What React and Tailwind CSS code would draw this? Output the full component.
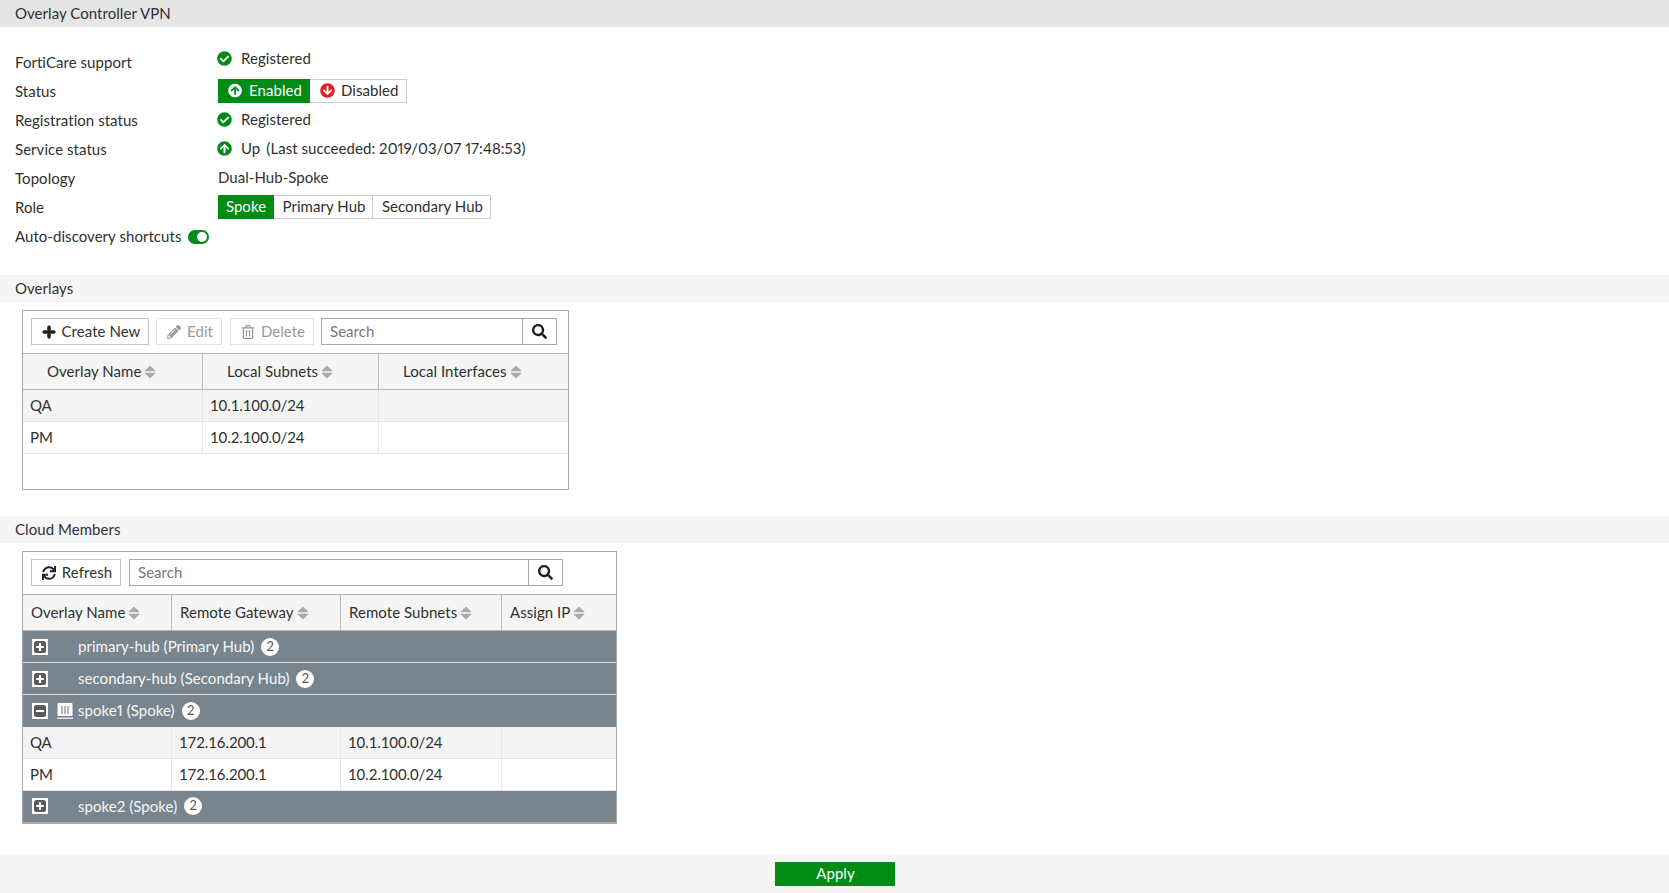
import React from 'react';
import {
  FaCheckCircle,
  FaArrowCircleUp,
  FaArrowCircleDown,
  FaPlus,
  FaPencilAlt,
  FaRegTrashAlt,
  FaSearch,
  FaSync,
} from 'react-icons/fa';

const FONT = "font-['Lato','Noto_Sans',sans-serif]";

function SortIcon() {
  return (
    <svg width="12" height="14" viewBox="0 0 12 14" className="ml-[3px] shrink-0" fill="#aaaaaa">
      <path d="M6 0.6 L11.2 5.4 Q11.6 6.2 10.8 6.2 L1.2 6.2 Q0.4 6.2 0.8 5.4 Z" />
      <path d="M6 13.4 L11.2 8.6 Q11.6 7.8 10.8 7.8 L1.2 7.8 Q0.4 7.8 0.8 8.6 Z" />
    </svg>
  );
}

function FormRow({ label, children, valueClass = 'mb-[2px]' }) {
  return (
    <div className="flex h-[29px] items-center">
      <div className="w-[218px] shrink-0 pl-[15px]">{label}</div>
      <div className={`flex items-center ${valueClass}`}>{children}</div>
    </div>
  );
}

function SectionBar({ children }) {
  return <div className="flex h-[27px] items-center bg-[#f5f5f5] pl-[15px]">{children}</div>;
}

function ToolButton({ icon, label, disabled, className = '' }) {
  return (
    <div
      className={`flex h-[27px] items-center justify-center gap-[6px] border bg-white pl-[2px] ${
        disabled ? 'border-[#e6e6e6] text-[#999999]' : 'border-[#c4c4c4] text-[#333333]'
      } ${className}`}
    >
      {icon}
      <span>{label}</span>
    </div>
  );
}

function SearchBox({ className }) {
  return (
    <div className={`flex h-[27px] border border-[#aaaaaa] bg-white ${className}`}>
      <div className="flex flex-1 items-center pl-2 text-[#777777]">Search</div>
      <div className="flex w-[34px] items-center justify-center border-l border-[#aaaaaa] text-[#222222]">
        <FaSearch size={15} />
      </div>
    </div>
  );
}

function HeaderRow({ cols, template }) {
  return (
    <div className={`grid h-[37px] border-y border-[#b4b4b4] bg-[#f5f5f5] ${template}`}>
      {cols.map((c, i) => (
        <div
          key={c.label}
          className={`flex items-center ${c.pad} ${i > 0 ? 'border-l border-[#bcbcbc]' : ''}`}
        >
          {c.label}
          <SortIcon />
        </div>
      ))}
    </div>
  );
}

function DataRow({ cells, template, striped, height }) {
  return (
    <div
      className={`grid border-b border-[#e4e4e4] ${height} ${template} ${
        striped ? 'bg-[#f4f4f4]' : 'bg-white'
      }`}
    >
      {cells.map((c, i) => (
        <div
          key={i}
          className={`flex items-center pl-[7px] ${i === 0 ? '' : 'border-l border-[#e8e8e8]'}`}
        >
          <span className="tabular-nums tracking-[-0.1px]">{c}</span>
        </div>
      ))}
    </div>
  );
}

function ExpandIcon({ open }) {
  return (
    <span className="flex h-4 w-4 shrink-0 items-center justify-center bg-white">
      <svg width="12" height="12" viewBox="0 0 12 12">
        <rect x="0" y="0" width="12" height="12" rx="2.5" fill="#5a5a5a" />
        <rect x="2" y="4.9" width="8" height="2.2" rx="0.6" fill="#ffffff" />
        {!open && <rect x="4.9" y="2" width="2.2" height="8" rx="0.6" fill="#ffffff" />}
      </svg>
    </span>
  );
}

function DeviceIcon() {
  return (
    <svg width="16" height="16" viewBox="0 0 16 16" className="shrink-0">
      <rect x="0.5" y="0" width="15" height="13" rx="1" fill="#ffffff" />
      <path d="M5 3v8M8 3v8M11 3v8" stroke="#78858f" strokeWidth="1.2" />
      <rect x="0" y="14.6" width="16" height="1.2" fill="#ffffff" />
    </svg>
  );
}

function GroupRow({ name, open, device, last, height = 'h-8' }) {
  return (
    <div
      className={`flex items-center bg-[#78858f] pl-[9px] text-white ${height} ${
        last ? 'pb-[1px]' : 'border-b border-[#dddddd]'
      }`}
    >
      <ExpandIcon open={open} />
      <span className="ml-[9px] w-[21px]">{device && <DeviceIcon />}</span>
      <span className="text-[#f4f7f9]">{name}</span>
      <span className="ml-[7px] flex h-[18px] w-[18px] items-center justify-center rounded-full bg-white text-[13px] text-[#555555]">
        2
      </span>
    </div>
  );
}

const overlayGrid = 'grid-cols-[179px_176px_1fr]';
const memberGrid = 'grid-cols-[148px_169px_161px_1fr]';

export default function App() {
  return (
    <div
      className={`flex h-[893px] w-full flex-col bg-white text-[15px] tracking-[0.05px] text-[#303030] proportional-nums ${FONT}`}
    >
      <div className="flex h-[27px] items-center bg-[#e5e5e5] pl-[15px]">Overlay Controller VPN</div>

      <div className="pt-[21px] pb-[24px]">
        <FormRow label="FortiCare support" valueClass="mb-[8px]">
          <FaCheckCircle size={15} className="ml-[-1px] text-[#008a16]" />
          <span className="ml-[9px]">Registered</span>
        </FormRow>
        <FormRow label="Status">
          <div className="flex h-6 w-[92px] items-center gap-[7px] bg-[#008a16] pl-[10px] pr-2 text-white">
            <FaArrowCircleUp size={15} />
            Enabled
          </div>
          <div className="flex h-6 w-[97px] items-center gap-[6px] border border-l-0 border-[#cccccc] pl-[10px]">
            <FaArrowCircleDown size={15} className="text-[#e02020]" />
            Disabled
          </div>
        </FormRow>
        <FormRow label="Registration status">
          <FaCheckCircle size={15} className="ml-[-1px] text-[#008a16]" />
          <span className="ml-[9px]">Registered</span>
        </FormRow>
        <FormRow label="Service status">
          <FaArrowCircleUp size={15} className="ml-[-1px] text-[#008a16]" />
          <span className="ml-[9px]">Up</span>
          <span className="ml-[6px]">(Last succeeded: 2019/03/07 17:48:53)</span>
        </FormRow>
        <FormRow label="Topology">Dual-Hub-Spoke</FormRow>
        <FormRow label="Role">
          <div className="flex h-6 w-[56px] items-center justify-center bg-[#008a16] text-white">Spoke</div>
          <div className="flex h-6 w-[99px] items-center justify-center border border-l-0 border-[#cccccc] pl-[2px]">Primary Hub</div>
          <div className="flex h-6 w-[118px] items-center justify-center border border-l-0 border-[#cccccc] pl-[2px]">Secondary Hub</div>
        </FormRow>
        <div className="flex h-[29px] items-center pl-[15px]">
          <span>Auto-discovery shortcuts</span>
          <span className="ml-[7px] flex h-[14px] w-[21px] items-center justify-end rounded-full bg-[#008a16] pr-[2px]">
            <span className="h-[10px] w-[10px] rounded-full bg-white" />
          </span>
        </div>
      </div>

      <SectionBar>Overlays</SectionBar>
      <div className="pl-[22px] pt-2">
        <div className="h-[180px] w-[547px] border border-[#aaaaaa]">
          <div className="flex h-[42px] items-start pl-2 pt-[7px]">
            <ToolButton
              icon={<FaPlus size={14} stroke="currentColor" strokeWidth={30} className="text-[#222222]" />}
              label="Create New"
              className="w-[118px]"
            />
            <ToolButton icon={<FaPencilAlt size={14} />} label="Edit" disabled className="ml-[7px] w-[66px]" />
            <ToolButton icon={<FaRegTrashAlt size={14} />} label="Delete" disabled className="ml-2 w-[84px]" />
            <SearchBox className="ml-[7px] w-[236px]" />
          </div>
          <HeaderRow
            template={overlayGrid}
            cols={[
              { label: 'Overlay Name', pad: 'pl-6' },
              { label: 'Local Subnets', pad: 'pl-6' },
              { label: 'Local Interfaces', pad: 'pl-6' },
            ]}
          />
          <DataRow template={overlayGrid} height="h-[32px]" striped cells={['QA', '10.1.100.0/24', '']} />
          <DataRow template={overlayGrid} height="h-[32px]" cells={['PM', '10.2.100.0/24', '']} />
        </div>
      </div>

      <div className="mt-[26px]">
        <SectionBar>Cloud Members</SectionBar>
      </div>
      <div className="pl-[22px] pt-2">
        <div className="w-[595px] border border-b-2 border-[#aaaaaa]">
          <div className="flex h-[42px] items-start pl-2 pt-[7px]">
            <ToolButton
              icon={<FaSync size={14} className="text-[#222222]" />}
              label="Refresh"
              className="w-[90px]"
            />
            <SearchBox className="ml-2 w-[434px]" />
          </div>
          <HeaderRow
            template={memberGrid}
            cols={[
              { label: 'Overlay Name', pad: 'pl-2' },
              { label: 'Remote Gateway', pad: 'pl-2' },
              { label: 'Remote Subnets', pad: 'pl-2' },
              { label: 'Assign IP', pad: 'pl-2' },
            ]}
          />
          <GroupRow name="primary-hub (Primary Hub)" />
          <GroupRow name="secondary-hub (Secondary Hub)" />
          <GroupRow name="spoke1 (Spoke)" open device last />
          <DataRow template={memberGrid} height="h-8" striped cells={['QA', '172.16.200.1', '10.1.100.0/24', '']} />
          <DataRow template={memberGrid} height="h-8" cells={['PM', '172.16.200.1', '10.2.100.0/24', '']} />
          <GroupRow name="spoke2 (Spoke)" last height="h-[31px]" />
        </div>
      </div>

      <div className="mt-auto flex h-[39px] items-center justify-center bg-[#f5f5f5]">
        <div className="flex h-6 w-[120px] items-center justify-center bg-[#008a16] pl-[2px] text-white">Apply</div>
      </div>
    </div>
  );
}
